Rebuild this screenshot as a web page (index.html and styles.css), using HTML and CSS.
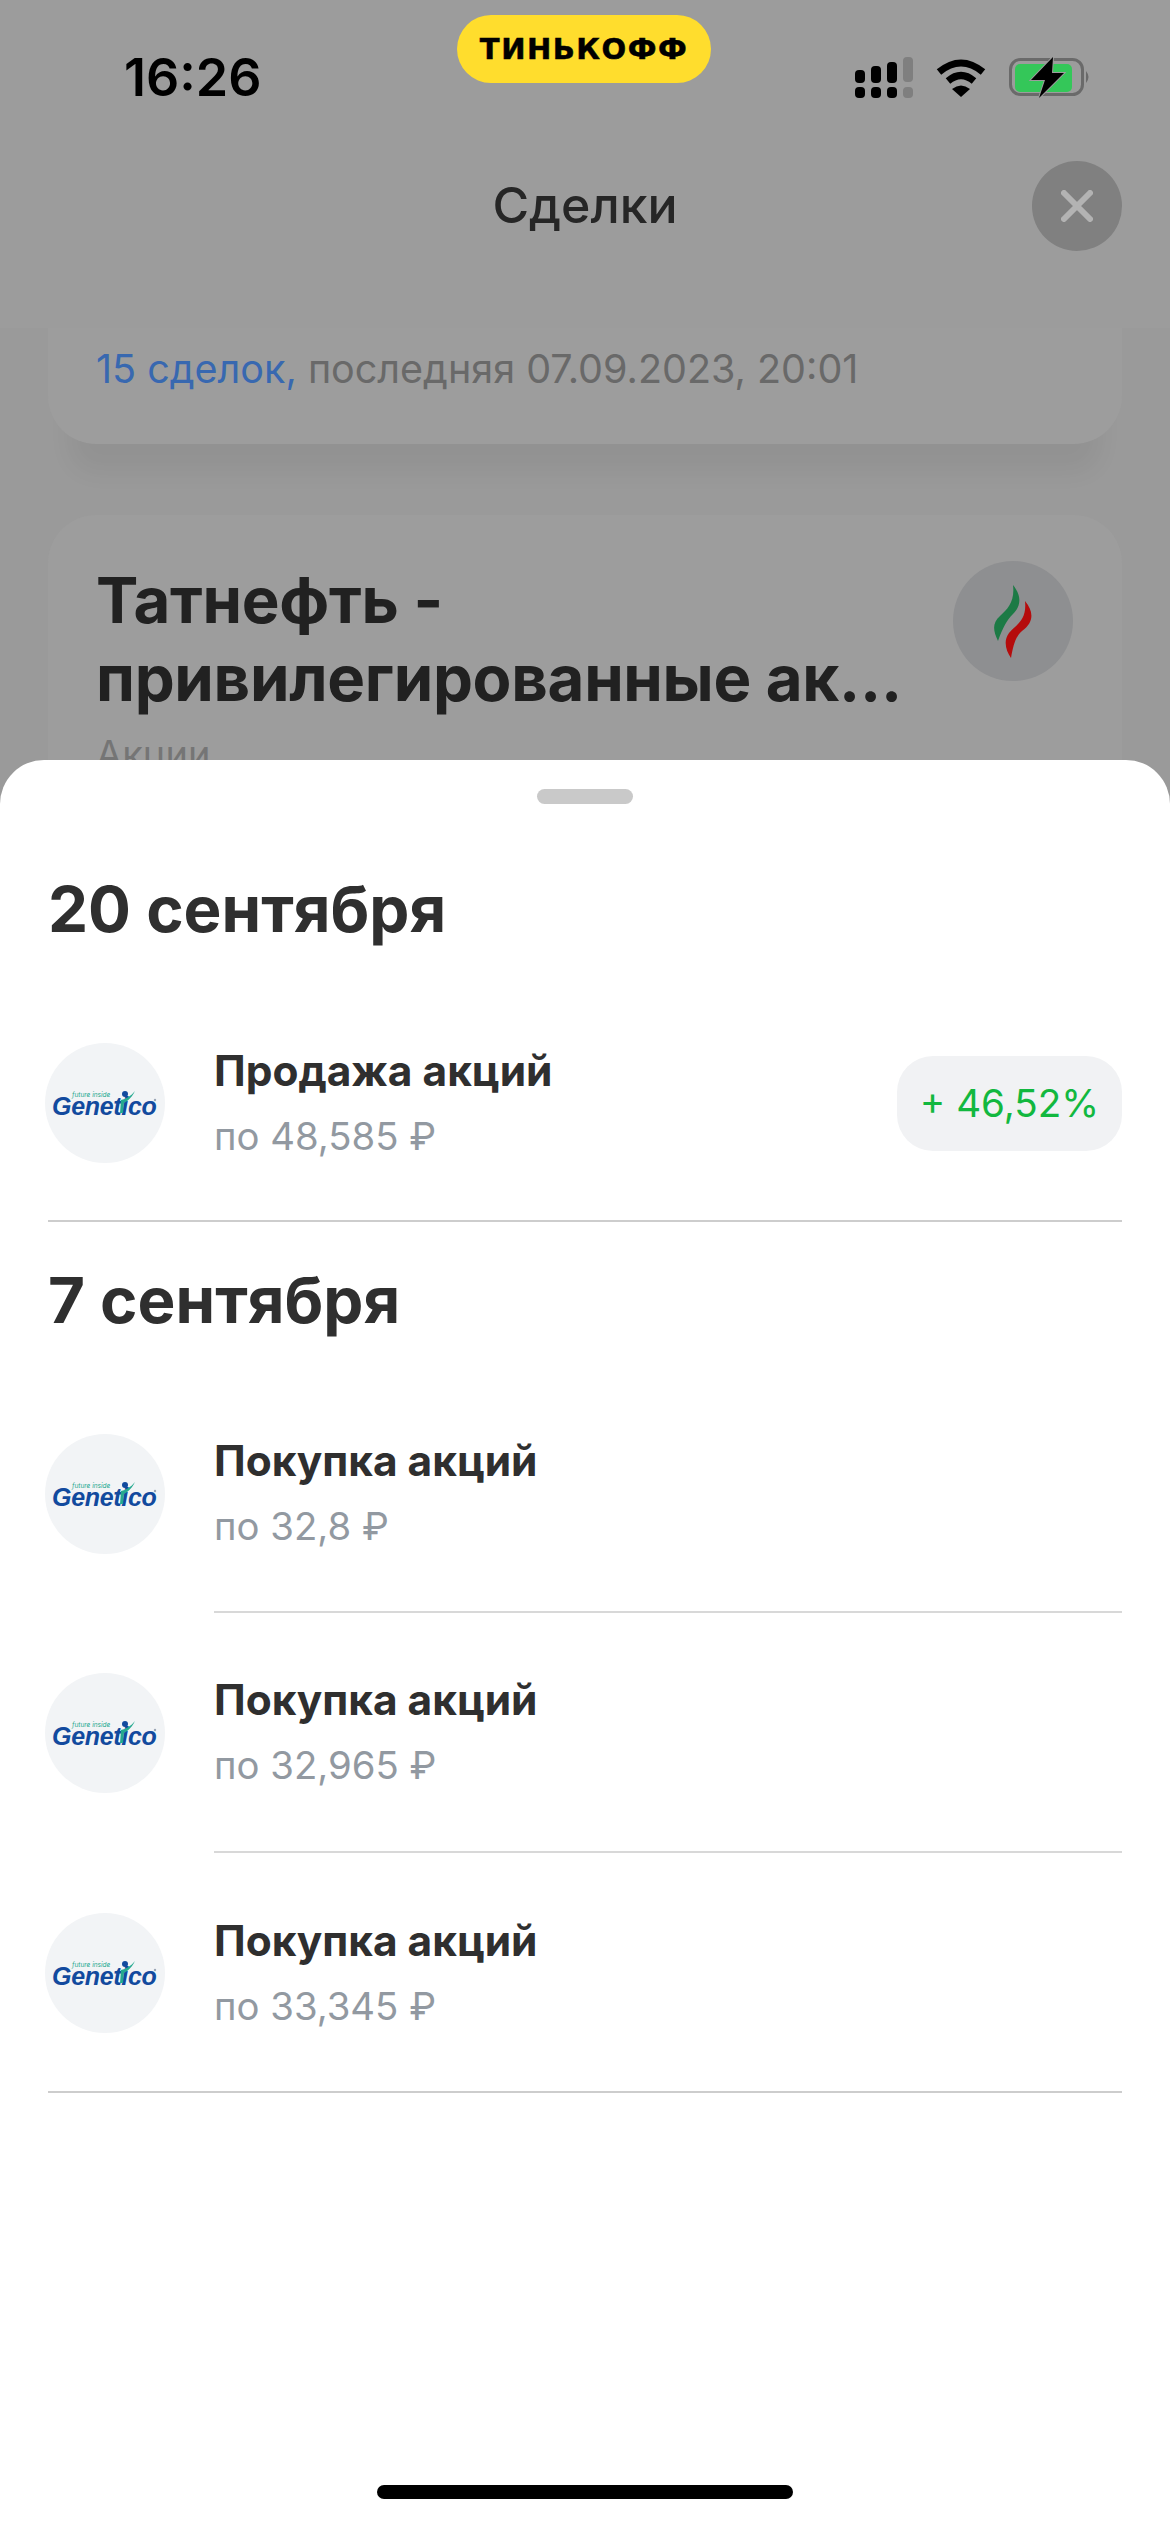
FILE: index.html
```html
<!DOCTYPE html>
<html lang="ru">
<head>
  <meta charset="UTF-8">
  <meta name="viewport" content="width=device-width, initial-scale=1.0">
  <title>Сделки</title>
  <link rel="stylesheet" href="styles.css">
</head>
<body>
  <div class="screen">
    <header class="top">
      <div class="status">
        <span class="time">16:26</span>
        <div class="brand">ТИНЬКОФФ</div>
        <div class="status-icons">
          <svg class="signal" width="58" height="42" viewBox="0 0 58 42">
            <rect x="0" y="13" width="10" height="13" rx="4" fill="#000"/>
            <rect x="0" y="30" width="10" height="11" rx="4" fill="#000"/>
            <rect x="16" y="9" width="10" height="17" rx="4" fill="#000"/>
            <rect x="16" y="30" width="10" height="11" rx="4" fill="#000"/>
            <rect x="32" y="5" width="10" height="21" rx="4" fill="#000"/>
            <rect x="32" y="30" width="10" height="11" rx="4" fill="#000"/>
            <rect x="48" y="0" width="10" height="25" rx="4" fill="#7f7f7f"/>
            <rect x="48" y="30" width="10" height="11" rx="4" fill="#7f7f7f"/>
          </svg>
          <svg class="wifi" width="50" height="38" viewBox="0 0 50 38">
            <path d="M3 13 Q25 -5 47 13" fill="none" stroke="#000" stroke-width="7"/>
            <path d="M12 22 Q25 11 38 22" fill="none" stroke="#000" stroke-width="7"/>
            <path d="M16 30 Q25 23 34 30 L25 38 Z" fill="#000"/>
          </svg>
          <svg class="battery" width="82" height="42" viewBox="0 0 82 42">
            <rect x="1.5" y="2.5" width="72" height="35" rx="10" fill="none" stroke="#6a6a6a" stroke-width="3"/>
            <rect x="6" y="7" width="57" height="28" rx="5" fill="#34c759"/>
            <path d="M77 14 Q82 20 77 26 Z" fill="#6a6a6a"/>
            <path d="M44 0 L22 23 L36 23 L30 41 L55 16 L43 16 Z" fill="#000" stroke="#9c9c9c" stroke-width="2" paint-order="stroke"/>
          </svg>
        </div>
      </div>
      <div class="nav">
        <h1 class="nav-title">Сделки</h1>
        <button class="close" aria-label="Закрыть">
          <svg width="32" height="32" viewBox="0 0 32 32">
            <path d="M3 3 L29 29 M29 3 L3 29" stroke="#b3b3b3" stroke-width="6" stroke-linecap="round"/>
          </svg>
        </button>
      </div>
    </header>

    <main class="behind">
      <section class="card card-summary">
        <p class="summary"><span class="summary-count">15 сделок,</span> последняя 07.09.2023, 20:01</p>
      </section>
      <section class="card card-asset">
        <div class="asset-head">
          <h2 class="asset-name">Татнефть -<br>привилегированные ак...</h2>
          <div class="asset-logo">
            <svg width="38" height="73" viewBox="0 0 38 73">
              <path d="M19 0 C27 10 28 20 19 29 C13 35 9 42 4 56 C-1 46 -2 38 6 31 C14 24 21 16 19 0 Z" fill="#1c7a45"/>
              <path d="M31 16 C40 27 40 37 28 46 C21 52 19 62 17 73 C12 66 9 56 15 48 C23 39 33 35 31 16 Z" fill="#b50c0c"/>
            </svg>
          </div>
        </div>
        <p class="asset-type">Акции</p>
      </section>
    </main>

    <div class="sheet">
      <div class="handle"></div>

      <section class="day">
        <h2 class="day-title">20 сентября</h2>
        <div class="deal">
          <div class="logo">
            <span class="logo-tag">future inside</span><span class="logo-name">Genetico</span>
            <svg class="logo-mark" width="120" height="120" viewBox="0 0 120 120">
              <path d="M90 48 C86 56 82 58 79 60 L78 70 L75 70 L76 57 C81 56 86 53 90 48 Z" fill="#25a98f"/>
              <circle cx="80" cy="51" r="3" fill="#124a9e"/>
              <circle cx="110" cy="57" r="1.2" fill="#9aa5b5"/>
            </svg>
          </div>
          <div class="deal-body">
            <div class="deal-text">
              <div class="deal-name">Продажа акций</div>
              <div class="deal-price">по 48,585 ₽</div>
            </div>
            <div class="profit">+ 46,52%</div>
          </div>
        </div>
      </section>

      <section class="day">
        <h2 class="day-title">7 сентября</h2>
        <div class="deal">
          <div class="logo">
            <span class="logo-tag">future inside</span><span class="logo-name">Genetico</span>
            <svg class="logo-mark" width="120" height="120" viewBox="0 0 120 120">
              <path d="M90 48 C86 56 82 58 79 60 L78 70 L75 70 L76 57 C81 56 86 53 90 48 Z" fill="#25a98f"/>
              <circle cx="80" cy="51" r="3" fill="#124a9e"/>
              <circle cx="110" cy="57" r="1.2" fill="#9aa5b5"/>
            </svg>
          </div>
          <div class="deal-body">
            <div class="deal-text">
              <div class="deal-name">Покупка акций</div>
              <div class="deal-price">по 32,8 ₽</div>
            </div>
          </div>
        </div>
        <div class="deal">
          <div class="logo">
            <span class="logo-tag">future inside</span><span class="logo-name">Genetico</span>
            <svg class="logo-mark" width="120" height="120" viewBox="0 0 120 120">
              <path d="M90 48 C86 56 82 58 79 60 L78 70 L75 70 L76 57 C81 56 86 53 90 48 Z" fill="#25a98f"/>
              <circle cx="80" cy="51" r="3" fill="#124a9e"/>
              <circle cx="110" cy="57" r="1.2" fill="#9aa5b5"/>
            </svg>
          </div>
          <div class="deal-body">
            <div class="deal-text">
              <div class="deal-name">Покупка акций</div>
              <div class="deal-price">по 32,965 ₽</div>
            </div>
          </div>
        </div>
        <div class="deal">
          <div class="logo">
            <span class="logo-tag">future inside</span><span class="logo-name">Genetico</span>
            <svg class="logo-mark" width="120" height="120" viewBox="0 0 120 120">
              <path d="M90 48 C86 56 82 58 79 60 L78 70 L75 70 L76 57 C81 56 86 53 90 48 Z" fill="#25a98f"/>
              <circle cx="80" cy="51" r="3" fill="#124a9e"/>
              <circle cx="110" cy="57" r="1.2" fill="#9aa5b5"/>
            </svg>
          </div>
          <div class="deal-body">
            <div class="deal-text">
              <div class="deal-name">Покупка акций</div>
              <div class="deal-price">по 33,345 ₽</div>
            </div>
          </div>
        </div>
      </section>

      <div class="home-bar"></div>
    </div>
  </div>
</body>
</html>
```

FILE: styles.css
```css
:root {
  --side: 48px;
  --dark: #2f2f2f;
  --grey: #9299a1;
  --line: #cdcdcd;
}

* { box-sizing: border-box; }

body {
  margin: 0;
  font-family: Inter, "Noto Sans", sans-serif;
  color: var(--dark);
}

h1, h2, p { margin: 0; }

.screen {
  position: relative;
  width: 1170px;
  height: 2532px;
  overflow: hidden;
  background: #9a9a9a;
}

/* Header */
.top { height: 328px; background: #9c9c9c; }

.status {
  position: relative;
  display: flex;
  justify-content: space-between;
  align-items: flex-start;
  height: 150px;
  padding: 50px 0 0 124px;
}
.time { font-size: 52px; line-height: 56px; font-weight: 600; color: #000; }
.brand {
  position: absolute;
  top: 15px;
  left: 457px;
  width: 254px;
  height: 68px;
  border-radius: 34px;
  background: #ffdd2d;
  color: #000;
  font-family: "DejaVu Sans", sans-serif;
  font-weight: 700;
  font-size: 29px;
  letter-spacing: 1.5px;
  -webkit-text-stroke: 0.5px #000;
  line-height: 68px;
  text-align: center;
}
.status-icons { display: flex; align-items: flex-start; gap: 23px; padding: 7px 79px 0 0; }
.wifi { margin-top: 2px; }

.nav { position: relative; display: flex; justify-content: center; padding-top: 20px; }
.nav-title { font-size: 50px; line-height: 70px; font-weight: 500; color: #262626; }
.close {
  position: absolute;
  top: 11px;
  right: 48px;
  display: flex;
  align-items: center;
  justify-content: center;
  width: 90px;
  height: 90px;
  padding: 0;
  border: 0;
  border-radius: 50%;
  background: #808080;
}

/* Cards under the sheet */
.behind { display: flex; flex-direction: column; gap: 71px; padding: 0 var(--side); }
.card { background: #9d9d9d; }
.card-summary {
  height: 116px;
  border-radius: 0 0 48px 48px;
  padding: 13px 48px 0;
  box-shadow: 0 50px 24px -22px rgba(0, 0, 0, 0.05);
}
.summary { font-size: 39.5px; line-height: 56px; color: #696969; }
.summary-count { color: #3868b0; }
.card-asset { height: 400px; border-radius: 48px; padding: 46px 48px 0; }
.asset-head { display: flex; justify-content: space-between; align-items: flex-start; }
.asset-name { font-size: 63.5px; line-height: 78px; font-weight: 700; letter-spacing: -0.3px; color: #212121; white-space: nowrap; }
.asset-logo {
  display: flex;
  align-items: center;
  justify-content: center;
  flex: none;
  width: 120px;
  height: 120px;
  margin-right: 1px;
  border-radius: 50%;
  background: #8e8f91;
}
.asset-type { margin-top: 14px; font-size: 38px; line-height: 46px; color: #757575; }

/* Sheet */
.sheet {
  position: absolute;
  inset: 760px 0 0 0;
  display: flex;
  flex-direction: column;
  padding: 29px var(--side) 0;
  background: #fff;
  border-radius: 44px 44px 0 0;
}
.handle {
  align-self: center;
  flex: none;
  width: 96px;
  height: 15px;
  border-radius: 8px;
  background: #c9c9c9;
}
.day { border-bottom: 2px solid var(--line); }
.day-title {
  margin-top: 38px;
  margin-bottom: 35px;
  font-size: 63.7px;
  line-height: 80px;
  font-weight: 700;
  color: var(--dark);
}
.handle + .day .day-title { margin-top: 65px; }

.deal { display: flex; align-items: center; height: 238px; }
.deal + .deal { height: 240px; }
.deal:last-child { margin-bottom: -2px; }
.logo {
  position: relative;
  flex: none;
  width: 120px;
  height: 120px;
  margin: 0 49px 0 -3px;
  border-radius: 50%;
  background: #f2f4f6;
}
.logo-tag {
  position: absolute;
  top: 48px;
  left: 27px;
  font-size: 6.5px;
  line-height: 8px;
  font-style: italic;
  color: #25a98f;
  white-space: nowrap;
}
.logo-name {
  position: absolute;
  top: 50px;
  left: 7px;
  font-family: "Liberation Sans", sans-serif;
  font-size: 25px;
  line-height: 26px;
  font-weight: 700;
  font-style: italic;
  letter-spacing: -0.3px;
  color: #124a9e;
}
.logo-mark { position: absolute; inset: 0; }
.deal-body { display: flex; align-items: center; justify-content: space-between; flex: 1; align-self: stretch; }
.deal:not(:last-child) .deal-body { border-bottom: 2px solid #d8d8d8; }
.deal-name { font-size: 42.4px; line-height: 54px; font-weight: 700; color: var(--dark); }
.deal-price { margin-top: 11px; font-size: 38.3px; line-height: 54px; color: var(--grey); }
.profit {
  display: flex;
  align-items: center;
  justify-content: center;
  width: 225px;
  height: 95px;
  border-radius: 36px;
  background: #f1f2f4;
  color: #12b83f;
  font-size: 38.6px;
}

.home-bar {
  align-self: center;
  flex: none;
  width: 416px;
  height: 14px;
  margin-top: auto;
  margin-bottom: 33px;
  border-radius: 7px;
  background: #000;
}
```
